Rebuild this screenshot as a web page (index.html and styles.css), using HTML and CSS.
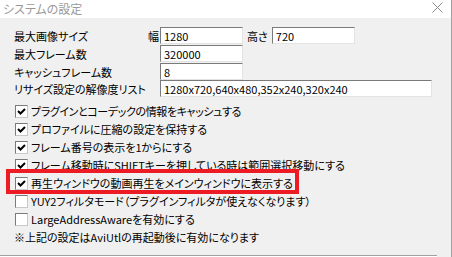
FILE: index.html
```html
<!DOCTYPE html>
<html lang="ja">
  <head>
    <meta charset="UTF-8" />
    <meta name="viewport" content="width=device-width, initial-scale=1.0" />
    <title>システムの設定</title>
    <link rel="stylesheet" href="styles.css">
  </head>
  <body>
    <div class="window">
      <div class="titlebar">
        <span class="title">システムの設定</span>
        <svg class="close" width="11" height="11" viewBox="0 0 11 11">
          <path d="M0.5 0.5 L10.5 10.5 M10.5 0.5 L0.5 10.5" stroke="#8a8a8a" stroke-width="1" fill="none" />
        </svg>
      </div>

      <div class="content">
        <div class="field-row">
          <label class="field-label">最大画像サイズ<span class="unit">幅</span></label>
          <input class="edit" type="text" value="1280" readonly />
          <span class="unit unit-h">高さ</span>
          <input class="edit" type="text" value="720" readonly />
        </div>
        <div class="field-row">
          <label class="field-label">最大フレーム数</label>
          <input class="edit" type="text" value="320000" readonly />
        </div>
        <div class="field-row">
          <label class="field-label">キャッシュフレーム数</label>
          <input class="edit" type="text" value="8" readonly />
        </div>
        <div class="field-row">
          <label class="field-label">リサイズ設定の解像度リスト</label>
          <input class="edit edit-wide" type="text" value="1280x720,640x480,352x240,320x240" readonly />
        </div>

        <ul class="options">
          <li class="option option-tight"><span class="check checked"></span>プラグインとコーデックの情報をキャッシュする</li>
          <li class="option"><span class="check checked"></span>プロファイルに圧縮の設定を保持する</li>
          <li class="option"><span class="check checked"></span>フレーム番号の表示を1からにする</li>
          <li class="option"><span class="check checked"></span>フレーム移動時にSHIFTキーを押している時は範囲選択移動にする</li>
          <li class="option"><span class="check checked"></span>再生ウィンドウの動画再生をメインウィンドウに表示する</li>
          <li class="option"><span class="check"></span>YUY2フィルタモード（プラグインフィルタが使えなくなります）</li>
          <li class="option"><span class="check"></span>LargeAddressAwareを有効にする</li>
        </ul>

        <p class="note">※上記の設定はAviUtlの再起動後に有効になります</p>
      </div>

      <div class="bottom-line"></div>
      <div class="highlight"></div>
    </div>
  </body>
</html>
```

FILE: styles.css
```css
* {
  box-sizing: border-box;
  margin: 0;
  padding: 0;
}

body {
  background-color: #f0f0f0;
  font-family: "Noto Sans CJK JP", "Noto Sans", sans-serif;
  font-size: 11px;
  font-feature-settings: "palt";
  color: #000;
  width: 452px;
  height: 257px;
  overflow: hidden;
}

.window {
  position: relative;
  width: 452px;
  height: 257px;
  border-right: 1px solid #a0a0a0;
  display: flex;
  flex-direction: column;
}

.titlebar {
  height: 18px;
  background-color: #fff;
  display: flex;
  align-items: center;
  justify-content: space-between;
  padding: 0 8px 0 3px;
}

.title {
  font-size: 12px;
  color: #999;
  line-height: 18px;
}

.close {
  margin-top: -4px;
}

.content {
  padding: 9px 0 0 14px;
  flex: 1;
}

.field-row {
  display: flex;
  align-items: center;
  height: 17px;
  margin-bottom: 1px;
}

.field-row:nth-child(3) {
  margin-bottom: 0;
}

.field-label {
  width: 146px;
  display: flex;
  justify-content: space-between;
  padding-right: 1px;
}

.unit {
  white-space: nowrap;
}

.unit-h {
  margin: 0 4px 0 4px;
}

.edit {
  width: 83px;
  height: 17px;
  font: inherit;
  font-size: 11px;
  padding: 0 3px;
  background-color: #fff;
  border-top: 1px solid #7a7a7a;
  border-left: 1px solid #7a7a7a;
  border-right: 1px solid #e3e3e3;
  border-bottom: 1px solid #e3e3e3;
  outline: none;
}

.edit-wide {
  width: 272px;
}

.options {
  list-style: none;
  margin-top: 5px;
}

.option {
  display: flex;
  align-items: center;
  height: 18px;
  white-space: nowrap;
}

.option-tight {
  letter-spacing: -0.4px;
}

.check {
  width: 13px;
  height: 13px;
  margin: 0 3px 0 1px;
  background-color: #fff;
  border: 1px solid;
  border-color: #7a7a7a #c8c8c8 #c8c8c8 #7a7a7a;
  flex-shrink: 0;
}

.check.checked {
  background-image: url("data:image/svg+xml;utf8,<svg xmlns='http://www.w3.org/2000/svg' width='11' height='11' viewBox='0 0 11 11'><path d='M2 5 L4.5 7.5 L9 3' stroke='black' stroke-width='2' fill='none'/></svg>");
  background-repeat: no-repeat;
}

.note {
  line-height: 18px;
}

.bottom-line {
  width: 437px;
  height: 2px;
  border-top: 1px solid #a0a0a0;
  border-bottom: 1px solid #fff;
}

/* annotation drawn on top of the dialog */
.highlight {
  position: absolute;
  left: 6px;
  top: 169px;
  width: 293px;
  height: 25px;
  border: 4px solid #ed1c24;
}
```
